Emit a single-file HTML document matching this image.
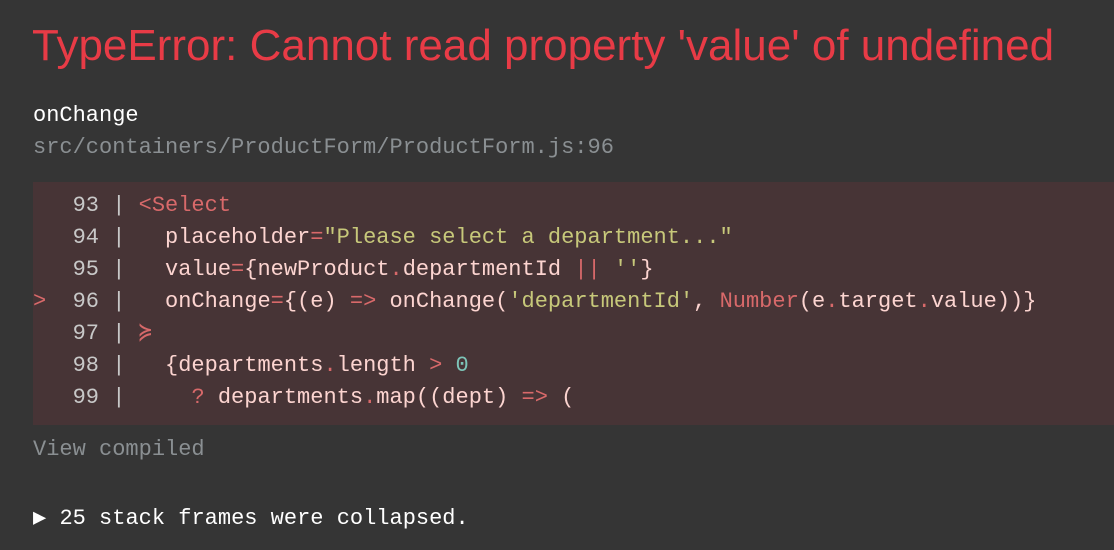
<!DOCTYPE html>
<html><head><meta charset="utf-8"><style>
html,body{margin:0;padding:0;background:#353535;width:1114px;height:550px;overflow:hidden}
.t{position:absolute;left:32px;top:21px;font:44px "Liberation Sans",sans-serif;color:#e83b46;white-space:nowrap}
.m{font-family:"Liberation Mono","DejaVu Sans Mono",monospace;font-size:22px;white-space:pre;position:absolute;left:33px}
.fn{top:103px;color:#fff}
.fl{top:135px;color:#8a8f92}
.code{position:absolute;left:33px;top:182px;width:1081px;height:243px;background:#473436}
.code pre{margin:0;position:absolute;left:0;top:8px;font-family:"Liberation Mono","DejaVu Sans Mono",monospace;font-size:22px;line-height:32px;color:#fcd4d0}
.g{color:#c8c8c8}.r{color:#d8696a}.s{color:#c7c87a}.n{color:#7dc4b8}
.vc{top:437px;color:#8a8f92}
.sf{top:505px;color:#fff}
</style></head><body>
<div class="t">TypeError: Cannot read property 'value' of undefined</div>
<div class="m fn">onChange</div>
<div class="m fl">src/containers/ProductForm/ProductForm.js:96</div>
<div class="code"><pre><span class="g">   93 | </span><span class="r">&lt;Select</span>
<span class="g">   94 | </span>  placeholder<span class="r">=</span><span class="s">"Please select a department..."</span>
<span class="g">   95 | </span>  value<span class="r">=</span>{newProduct<span class="r">.</span>departmentId <span class="r">||</span> <span class="s">''</span>}
<span class="r">&gt;</span><span class="g">  96 | </span>  onChange<span class="r">=</span>{(e) <span class="r">=&gt;</span> onChange(<span class="s">'departmentId'</span>, <span class="r">Number</span>(e<span class="r">.</span>target<span class="r">.</span>value))}
<span class="g">   97 | </span><span class="r">≽</span>
<span class="g">   98 | </span>  {departments<span class="r">.</span>length <span class="r">&gt;</span> <span class="n">0</span>
<span class="g">   99 | </span>    <span class="r">?</span> departments<span class="r">.</span>map((dept) <span class="r">=&gt;</span> (</pre></div>
<div class="m vc">View compiled</div>
<div class="m sf">▶ 25 stack frames were collapsed.</div>
</body></html>
